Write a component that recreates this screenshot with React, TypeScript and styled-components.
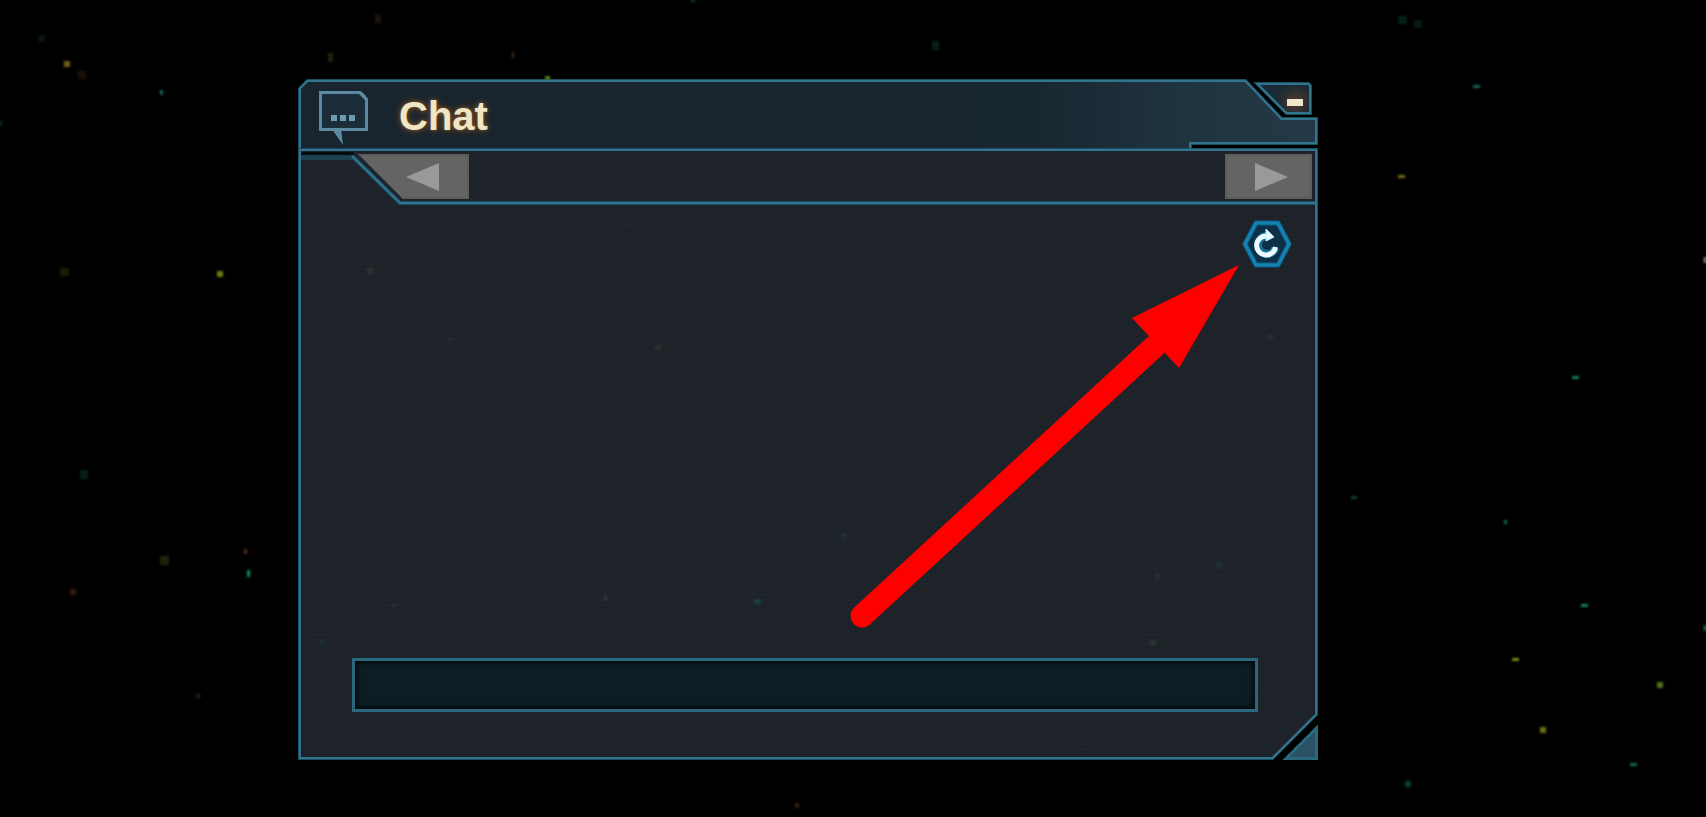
import React, { useState } from "react";
import styled, { createGlobalStyle, css } from "styled-components";

const line = { edge: "#1b4e62", core: "#32758e" };

const GlobalStyle = createGlobalStyle`
  *, *::before, *::after { box-sizing: border-box; }
  body { margin: 0; background: #000; }
  button, input { font: inherit; color: inherit; }
`;

/* Extra reach of a 45 degree cut once its shape is inset by i pixels. */
const cut = (i: number) => Math.round(i * 0.41);

const headerShape = (i: number) => {
  const d = cut(i);
  return `polygon(
    ${i}px ${9 + d}px, ${9 + d}px ${i}px,
    calc(100% - ${72 + d}px) ${i}px, calc(100% - ${36 + d}px) ${38 + i}px,
    calc(100% - ${i}px) ${38 + i}px, calc(100% - ${i}px) ${66 - i}px,
    calc(100% - ${126 + i}px) ${66 - i}px, calc(100% - ${126 + i}px) 100%,
    ${i}px 100%)`;
};

const bodyShape = (i: number) => {
  const c = 45 + cut(i);
  return `polygon(
    ${i}px ${i}px, calc(100% - ${i}px) ${i}px,
    calc(100% - ${i}px) calc(100% - ${c}px), calc(100% - ${c}px) calc(100% - ${i}px),
    ${i}px calc(100% - ${i}px))`;
};

const minimiseShape = (i: number) => {
  const d = cut(i);
  return `polygon(
    ${2 * i + d}px ${i}px, calc(100% - ${3 + d}px) ${i}px,
    calc(100% - ${i}px) ${3 + d}px, calc(100% - ${i}px) calc(100% - ${i}px),
    ${33 + d}px calc(100% - ${i}px))`;
};

/* Two-tone outline: a dark edge, a bright core and the fill, each clipped to the same shape. */
const outlined = (shape: (i: number) => string, fill: string) => css`
  position: relative;
  isolation: isolate;
  background: ${line.edge};
  clip-path: ${shape(0)};
  &::before, &::after {
    content: "";
    position: absolute;
    inset: 0;
    z-index: -1;
  }
  &::before {
    background: ${line.core};
    clip-path: ${shape(1)};
  }
  &::after {
    background: ${fill};
    clip-path: ${shape(3)};
  }
`;

const Page = styled.main`
  position: relative;
  display: flex;
  min-height: 100vh;
  padding: 79px 388px 57px 298px;
  overflow: hidden;
  font-family: "Liberation Sans", Arial, sans-serif;
  @media (max-width: 1200px) {
    padding: 40px;
  }
`;

const Window = styled.section`
  position: relative;
  display: flex;
  flex: 1;
  flex-direction: column;
  min-width: 0;
`;

const Header = styled.header`
  ${outlined(headerShape, "linear-gradient(90deg, #18252e 0%, #18262f 72%, #1f333f 86%, #243947 100%)")}
  display: flex;
  align-items: center;
  gap: 31px;
  height: 69px;
  padding: 10px 0 0 21px;
`;

const Title = styled.h1`
  margin: 0;
  padding-bottom: 6px;
  color: #efe6c6;
  font-size: 40px;
  font-weight: 700;
  line-height: 48px;
  text-shadow: 0 0 4px #8a5a2c, 0 0 8px #5e3d20;
`;

const Minimise = styled.button`
  ${outlined(minimiseShape, "radial-gradient(circle at 42px 20px, #4a3a2c 0, #1a2a34 18px)")}
  position: absolute;
  top: 3px;
  right: 6px;
  display: flex;
  align-items: center;
  justify-content: flex-end;
  width: 59px;
  height: 33px;
  padding: 8px 9px 0 0;
  border: 0;
  cursor: pointer;
`;

const Dash = styled.span`
  width: 16px;
  height: 7px;
  background: #efe6c6;
`;

const Body = styled.div`
  ${outlined(
    bodyShape,
    "linear-gradient(90deg, #0a0d10, transparent 5px, transparent calc(100% - 5px), #0a0d10), repeating-linear-gradient(#1f242b 0 3px, #1d2128 3px 5px)"
  )}
  display: flex;
  flex: 1;
  flex-direction: column;
`;

const TabBar = styled.nav`
  display: flex;
  justify-content: space-between;
  height: 57px;
  padding: 6px 6px 0 4px;
`;

const TabStart = styled.div`
  display: flex;
`;

const Rule = styled.div`
  height: 4px;
  margin: -4px 3px 0 101px;
  border: solid ${line.edge};
  border-width: 1px 0;
  background: ${line.core};
`;

const NotchArt = styled.svg`
  position: absolute;
  top: 4px;
  left: 3px;
`;

const TabButton = styled.button<{ $side: "start" | "end" }>`
  display: flex;
  align-items: center;
  height: 45px;
  padding: 0;
  border: 0;
  background: #646464;
  box-shadow: inset 0 0 0 2px #5c5c5c;
  cursor: pointer;
  ${({ $side }) =>
    $side === "start"
      ? css`
          justify-content: flex-end;
          width: 111px;
          margin-left: 56px;
          padding-right: 30px;
          clip-path: polygon(0 0, 100% 0, 100% 100%, 45px 100%);
        `
      : css`
          width: 87px;
          padding-left: 30px;
        `}
`;

const Messages = styled.div`
  display: flex;
  flex: 1;
  align-items: flex-start;
  justify-content: flex-end;
  min-height: 120px;
  padding: 15px 26px 0 0;
`;

const Refresh = styled.button`
  display: flex;
  padding: 0;
  border: 0;
  background: none;
  cursor: pointer;
`;

const Entry = styled.form`
  display: flex;
  padding: 0 60px 48px 54px;
`;

const ChatInput = styled.input`
  flex: 1;
  min-width: 0;
  height: 54px;
  padding: 0 16px;
  border: 3px solid #2a687f;
  border-radius: 0;
  background: #0c1e24;
  box-shadow: inset 0 0 5px 2px #03080a;
  color: #efe6c6;
  font-size: 20px;
  outline: none;
`;

const ResizeGrip = styled.svg`
  position: absolute;
  right: 0;
  bottom: 0;
`;

const Pointer = styled.svg`
  position: absolute;
  top: 184px;
  right: 77px;
  pointer-events: none;
`;

const Sky = styled.svg`
  position: absolute;
  inset: 0;
  width: 100%;
  height: 100%;
  pointer-events: none;
  filter: blur(1px);
`;

/* x, y, width, height, colour */
type Star = [number, number, number, number, string];

const stars: Star[] = [
  [38, 35, 7, 7, "#0a170c"], [64, 61, 6, 6, "#6a6412"], [78, 71, 8, 8, "#1c1006"],
  [160, 90, 3, 5, "#12625a"], [0, 121, 2, 5, "#0c3430"], [60, 268, 9, 8, "#1a1c06"],
  [217, 271, 6, 6, "#6b7a0e"], [80, 470, 8, 9, "#06201a"], [160, 556, 9, 9, "#22220a"],
  [70, 589, 6, 6, "#321a0c"], [244, 549, 3, 5, "#5a2c12"], [247, 570, 3, 7, "#0e8a68"],
  [196, 694, 4, 4, "#0c2c28"], [375, 14, 6, 9, "#1c100a"], [328, 53, 5, 9, "#1e2406"],
  [512, 52, 2, 6, "#4c2c12"], [545, 76, 5, 4, "#4a801c"], [691, 0, 4, 2, "#0c4a40"],
  [932, 41, 7, 9, "#062018"], [1398, 16, 9, 8, "#06201a"], [1414, 20, 8, 8, "#061a18"],
  [1473, 85, 7, 3, "#13645a"], [1398, 175, 7, 3, "#7a6c14"], [1572, 376, 7, 3, "#127c5e"],
  [1351, 496, 6, 3, "#0e3e38"], [1504, 520, 3, 4, "#0e6c40"], [1581, 604, 7, 3, "#148068"],
  [1512, 658, 7, 3, "#74881a"], [1657, 682, 6, 6, "#4e721c"], [1540, 727, 6, 6, "#6a6e10"],
  [1630, 763, 7, 3, "#126a4a"], [1405, 781, 6, 6, "#0c3a3c"], [1704, 257, 2, 6, "#a0a0a0"],
  [1704, 625, 2, 6, "#128a68"], [795, 803, 4, 5, "#3a1e0a"],
  [367, 268, 6, 6, "#2a342c"], [654, 346, 7, 3, "#2e352e"], [448, 337, 4, 4, "#262c34"],
  [625, 223, 6, 4, "#22272e"], [391, 603, 5, 4, "#282e2c"], [604, 595, 3, 6, "#2e3630"],
  [754, 599, 7, 5, "#1b3e44"], [319, 639, 6, 5, "#1c2e36"], [841, 533, 6, 5, "#1e3238"],
  [1156, 573, 3, 6, "#28363c"], [1216, 562, 6, 6, "#22323a"], [1150, 640, 6, 5, "#2a3630"],
  [1267, 335, 6, 4, "#2c322e"], [1081, 747, 4, 3, "#22282c"],
];

const ChatIcon = () => (
  <svg width="49" height="56" viewBox="0 0 49 56" aria-hidden="true">
    <path d="M1.500 1.500H41L47.500 8V38.500H1.500Z" fill="#1a2d38" stroke="#5b8aa2" strokeWidth="3" />
    <path d="M39 2L47 10V5L43 1Z" fill="#5b8aa2" />
    <path d="M13 38H22L24 54Z" fill="#5b8aa2" />
    <path d="M12 24h6v6h-6zM21 24h6v6h-6zM30 24h6v6h-6z" fill="#6c9cb4" />
  </svg>
);

const Triangle = ({ flip }: { flip?: boolean }) => (
  <svg width="33" height="28" viewBox="0 0 33 28" aria-hidden="true">
    <path d={flip ? "M33 0V28L0 14Z" : "M0 0V28L33 14Z"} fill="#999" />
  </svg>
);

const RefreshIcon = () => (
  <svg width="50" height="48" viewBox="0 0 50 48" aria-hidden="true">
    <path d="M14 3H36L47 24L36 45H14L3 24Z" fill="#0d3046" stroke="#0d5f88" strokeWidth="5" strokeLinejoin="round" />
    <path d="M14 3H36L47 24L36 45H14L3 24Z" fill="none" stroke="#1583b2" strokeWidth="3" strokeLinejoin="round" />
    <g fill="none" stroke="#1c9ad0" strokeWidth="8" opacity="0.600">
      <path d="M24 16A9 9 0 1 0 33.500 28" />
    </g>
    <path d="M24 16A9.500 9.500 0 1 0 33.500 27" fill="none" stroke="#eafaff" strokeWidth="5" />
    <path d="M24 9L32 17L24 21Z" fill="#eafaff" stroke="#bfeaff" strokeWidth="1" />
  </svg>
);

export default function App() {
  const [message, setMessage] = useState("");
  return (
    <>
      <GlobalStyle />
      <Page>
        <Window aria-labelledby="chat-title">
          <Header>
            <ChatIcon />
            <Title id="chat-title">Chat</Title>
          </Header>
          <Minimise type="button" aria-label="Minimise">
            <Dash />
          </Minimise>
          <Body>
            <TabBar aria-label="Channels">
              <TabStart>
                <NotchArt width="110" height="55" viewBox="0 0 110 55" aria-hidden="true">
                  <path d="M0 0H52L54 3H0Z" fill="#080c10" />
                  <path d="M0 3H52L56 8H0Z" fill="#1c4252" />
                  <path d="M51 4L99 51" fill="none" stroke={line.edge} strokeWidth="4" />
                  <path d="M51 4L99 51" fill="none" stroke={line.core} strokeWidth="2" />
                </NotchArt>
                <TabButton type="button" $side="start" aria-label="Previous channel">
                  <Triangle flip />
                </TabButton>
              </TabStart>
              <TabButton type="button" $side="end" aria-label="Next channel">
                <Triangle />
              </TabButton>
            </TabBar>
            <Rule />
            <Messages>
              <Refresh type="button" aria-label="Refresh">
                <RefreshIcon />
              </Refresh>
            </Messages>
            <Entry onSubmit={(e: React.FormEvent) => e.preventDefault()}>
              <ChatInput
                type="text"
                aria-label="Message"
                value={message}
                onChange={(e: React.ChangeEvent<HTMLInputElement>) => setMessage(e.target.value)}
              />
            </Entry>
          </Body>
          <ResizeGrip width="37" height="37" viewBox="0 0 37 37" aria-hidden="true">
            <path d="M35.500 5V35.500H5Z" fill="#2c5165" stroke="#2a687f" strokeWidth="3" />
          </ResizeGrip>
          <Pointer width="396" height="370" viewBox="0 0 396 370" aria-hidden="true">
            <path d="M17 353L310 83" stroke="#f00" strokeWidth="23" strokeLinecap="round" />
            <path d="M394 2L287 55L334 105Z" fill="#f00" />
          </Pointer>
        </Window>
        <Sky viewBox="0 0 1706 817" preserveAspectRatio="xMidYMid slice" aria-hidden="true">
          {stars.map(([x, y, w, h, colour]) => (
            <rect key={`${x}-${y}`} x={x} y={y} width={w} height={h} fill={colour} />
          ))}
        </Sky>
      </Page>
    </>
  );
}
